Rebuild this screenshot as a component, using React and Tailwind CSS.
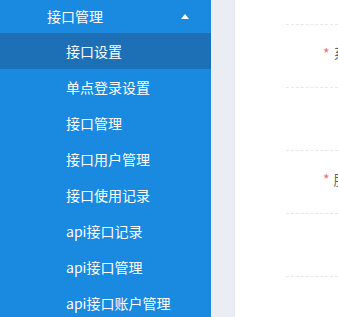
import React from 'react'

const items = [
  '接口设置',
  '单点登录设置',
  '接口管理',
  '接口用户管理',
  '接口使用记录',
  'api接口记录',
  'api接口管理',
  'api接口账户管理',
]

const fields = ['系统名称', '', '服务地址', '', '']

export default function App() {
  return (
    <div
      className="flex h-[317px] w-[338px] overflow-hidden bg-white"
      style={{ fontFamily: '"Microsoft YaHei", "Noto Sans CJK SC", sans-serif' }}
    >
      {/* Sidebar menu */}
      <div className="w-[211px] shrink-0 bg-[#1a89e0] text-[14px] text-white">
        <div className="flex h-[33px] items-center justify-between pl-[47px] pr-[22px]">
          <span>接口管理</span>
          <span className="h-0 w-0 border-x-[4px] border-b-[5px] border-x-transparent border-b-white" />
        </div>
        {items.map((label, i) => (
          <div
            key={label}
            className={`flex h-[36px] items-center pl-[66px] ${i === 0 ? 'bg-[#1d70b6]' : ''}`}
          >
            {label}
          </div>
        ))}
      </div>

      {/* Gutter */}
      <div className="w-[24px] shrink-0 border-r border-[#e2e5eb] bg-[#eaedf3]" />

      {/* Form area */}
      <div className="flex-1 overflow-hidden pl-[51px] pt-[24px]">
        {fields.map((f, i) => (
          <div
            key={i}
            className="flex h-[63px] items-center border-t border-dashed border-[#e4e7ed] pb-[5px] pl-[37px] text-[14px] text-[#606266]"
          >
            {f && (
              <>
                <span className="mr-[4px] text-[#f56c6c]">*</span>
                <span className="whitespace-nowrap">{f}</span>
              </>
            )}
          </div>
        ))}
      </div>
    </div>
  )
}
